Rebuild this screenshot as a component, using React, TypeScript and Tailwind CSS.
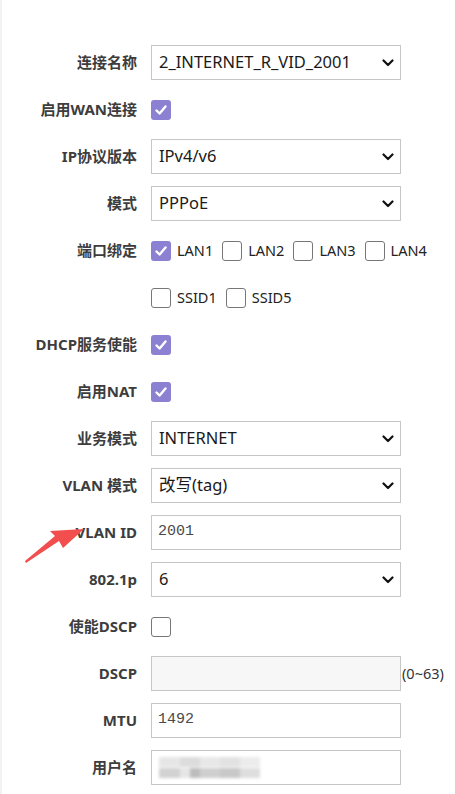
import React from 'react';

const labelFont = { fontFamily: '"Noto Sans", "Noto Sans CJK SC", sans-serif' };

const Check = ({ checked }: { checked?: boolean }) =>
  checked ? (
    <span className="flex h-[20px] w-[20px] shrink-0 items-center justify-center rounded-[3px] bg-[#8b80d2]">
      <svg width="14" height="14" viewBox="0 0 14 14">
        <path d="M2.5 7.5 L5.6 10.5 L11.5 3.5" fill="none" stroke="#fff" strokeWidth="2.4" strokeLinecap="round" strokeLinejoin="round" />
      </svg>
    </span>
  ) : (
    <span className="block h-[20px] w-[20px] shrink-0 rounded-[3px] border border-[#777] bg-white" />
  );

const Chevron = () => (
  <svg width="12" height="8" viewBox="0 0 12 8" className="ml-auto">
    <path d="M1.5 1.5 L6 6 L10.5 1.5" fill="none" stroke="#111" strokeWidth="2.2" strokeLinecap="round" strokeLinejoin="round" />
  </svg>
);

const Select = ({ value }: { value: string }) => (
  <div className="flex h-[35px] w-[250px] items-center border border-[#c6c6c6] bg-white pl-[7px] pr-[6px] text-[16.5px] text-[#1a1a1a]">
    <span>{value}</span>
    <Chevron />
  </div>
);

const Input = ({ value, disabled }: { value?: string; disabled?: boolean }) => (
  <div
    className={`flex h-[35px] w-[250px] items-center border border-[#c6c6c6] pl-[6px] text-[15px] text-[#4a4a4a] ${disabled ? 'bg-[#f7f7f7]' : 'bg-white'}`}
    style={{ fontFamily: '"Liberation Mono", monospace' }}
  >
    {value}
  </div>
);

const Row = ({ label, children }: { label?: string; children: React.ReactNode }) => (
  <div className="flex h-[47px] items-center">
    <div className="w-[137px] shrink-0 text-right text-[15px] font-bold text-[#3d3d3d]">{label}</div>
    <div className="ml-[14px] flex items-center">{children}</div>
  </div>
);

const Opt = ({ label, checked }: { label: string; checked?: boolean }) => (
  <label className="mr-[9px] flex items-center gap-[6px] text-[14.5px] text-[#222]">
    <Check checked={checked} />
    <span>{label}</span>
  </label>
);

export default function App() {
  return (
    <div className="relative min-h-[794px] w-[455px] overflow-hidden bg-white" style={labelFont}>
      <div className="absolute left-0 top-0 h-full w-[2px] bg-[#f2f2f2]" />
      <div className="pt-[39px]">
        <Row label="连接名称"><Select value="2_INTERNET_R_VID_2001" /></Row>
        <Row label="启用WAN连接"><Check checked /></Row>
        <Row label="IP协议版本"><Select value="IPv4/v6" /></Row>
        <Row label="模式"><Select value="PPPoE" /></Row>
        <Row label="端口绑定">
          <Opt label="LAN1" checked />
          <Opt label="LAN2" />
          <Opt label="LAN3" />
          <Opt label="LAN4" />
        </Row>
        <Row>
          <Opt label="SSID1" />
          <Opt label="SSID5" />
        </Row>
        <Row label="DHCP服务使能"><Check checked /></Row>
        <Row label="启用NAT"><Check checked /></Row>
        <Row label="业务模式"><Select value="INTERNET" /></Row>
        <Row label="VLAN 模式"><Select value="改写(tag)" /></Row>
        <Row label="VLAN ID"><Input value="2001" /></Row>
        <Row label="802.1p"><Select value="6" /></Row>
        <Row label="使能DSCP"><Check /></Row>
        <Row label="DSCP">
          <Input disabled />
          <span className="ml-[1px] text-[14.5px] text-[#333]">(0~63)</span>
        </Row>
        <Row label="MTU"><Input value="1492" /></Row>
        <Row label="用户名">
          <div className="flex h-[35px] w-[250px] items-center border border-[#c6c6c6] bg-white pl-[7px]">
            <div className="flex flex-col gap-[1px] blur-[1.5px]">
              <div className="flex">
                <span className="h-[10px] w-[21px] bg-[#e6e6e6]" />
                <span className="h-[10px] w-[20px] bg-[#dcdcdc]" />
                <span className="h-[10px] w-[20px] bg-[#e8e8e8]" />
                <span className="h-[10px] w-[20px] bg-[#e2e2e2]" />
                <span className="h-[10px] w-[20px] bg-[#ececec]" />
              </div>
              <div className="flex">
                <span className="h-[10px] w-[21px] bg-[#d2d2d2]" />
                <span className="h-[10px] w-[10px] bg-[#e6e6e6]" />
                <span className="h-[10px] w-[10px] bg-[#bdbdbd]" />
                <span className="h-[10px] w-[20px] bg-[#cfcfcf]" />
                <span className="h-[10px] w-[20px] bg-[#c8c8c8]" />
                <span className="h-[10px] w-[20px] bg-[#dedede]" />
              </div>
            </div>
          </div>
        </Row>
      </div>
      <svg className="absolute left-0 top-0" width="455" height="794" viewBox="0 0 455 794">
        <path d="M84 529 L63 548 L59 541 L26 563 L25 561 L55 536 L50 531 Z" fill="#f24e4e" />
      </svg>
    </div>
  );
}
